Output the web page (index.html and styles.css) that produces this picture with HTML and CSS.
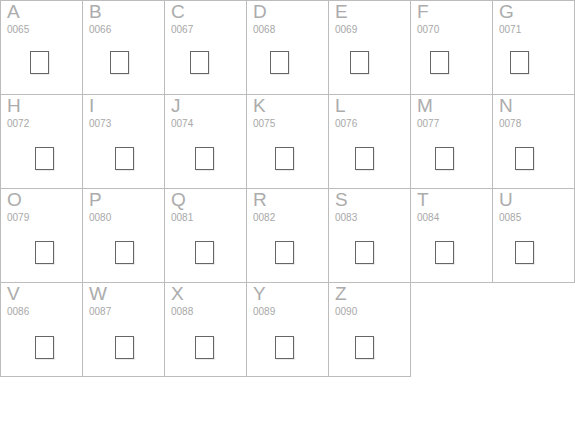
FILE: index.html
```html
<!DOCTYPE html>
<html>
<head>
<meta charset="utf-8">
<link rel="stylesheet" href="styles.css">
</head>
<body>
<div class="charmap">
  <div class="cell"><div class="letter">A</div><div class="code">0065</div><div class="glyph"></div></div>
  <div class="cell"><div class="letter">B</div><div class="code">0066</div><div class="glyph"></div></div>
  <div class="cell"><div class="letter">C</div><div class="code">0067</div><div class="glyph"></div></div>
  <div class="cell"><div class="letter">D</div><div class="code">0068</div><div class="glyph"></div></div>
  <div class="cell"><div class="letter">E</div><div class="code">0069</div><div class="glyph"></div></div>
  <div class="cell"><div class="letter">F</div><div class="code">0070</div><div class="glyph"></div></div>
  <div class="cell"><div class="letter">G</div><div class="code">0071</div><div class="glyph"></div></div>
  <div class="cell"><div class="letter">H</div><div class="code">0072</div><div class="glyph"></div></div>
  <div class="cell"><div class="letter">I</div><div class="code">0073</div><div class="glyph"></div></div>
  <div class="cell"><div class="letter">J</div><div class="code">0074</div><div class="glyph"></div></div>
  <div class="cell"><div class="letter">K</div><div class="code">0075</div><div class="glyph"></div></div>
  <div class="cell"><div class="letter">L</div><div class="code">0076</div><div class="glyph"></div></div>
  <div class="cell"><div class="letter">M</div><div class="code">0077</div><div class="glyph"></div></div>
  <div class="cell"><div class="letter">N</div><div class="code">0078</div><div class="glyph"></div></div>
  <div class="cell"><div class="letter">O</div><div class="code">0079</div><div class="glyph"></div></div>
  <div class="cell"><div class="letter">P</div><div class="code">0080</div><div class="glyph"></div></div>
  <div class="cell"><div class="letter">Q</div><div class="code">0081</div><div class="glyph"></div></div>
  <div class="cell"><div class="letter">R</div><div class="code">0082</div><div class="glyph"></div></div>
  <div class="cell"><div class="letter">S</div><div class="code">0083</div><div class="glyph"></div></div>
  <div class="cell"><div class="letter">T</div><div class="code">0084</div><div class="glyph"></div></div>
  <div class="cell"><div class="letter">U</div><div class="code">0085</div><div class="glyph"></div></div>
  <div class="cell"><div class="letter">V</div><div class="code">0086</div><div class="glyph"></div></div>
  <div class="cell"><div class="letter">W</div><div class="code">0087</div><div class="glyph"></div></div>
  <div class="cell"><div class="letter">X</div><div class="code">0088</div><div class="glyph"></div></div>
  <div class="cell"><div class="letter">Y</div><div class="code">0089</div><div class="glyph"></div></div>
  <div class="cell"><div class="letter">Z</div><div class="code">0090</div><div class="glyph"></div></div>
</div>
</body>
</html>
```

FILE: styles.css
```css
html, body {
  margin: 0;
  padding: 0;
  background: #ffffff;
}

body {
  font-family: "Liberation Sans", Arial, sans-serif;
}

.charmap {
  display: grid;
  grid-template-columns: repeat(7, 82px);
  grid-auto-rows: 94px;
  width: 575px;
  box-sizing: border-box;
  border-top: 1px solid #bcbcbc;
  border-left: 1px solid #bcbcbc;
}

.cell {
  border-right: 1px solid #bcbcbc;
  border-bottom: 1px solid #bcbcbc;
  --col: 0;
  --rowx: 34px;
  --rowy: 52px;
}

.cell:nth-child(7n+2) { --col: 1; }
.cell:nth-child(7n+3) { --col: 2; }
.cell:nth-child(7n+4) { --col: 3; }
.cell:nth-child(7n+5) { --col: 4; }
.cell:nth-child(7n+6) { --col: 5; }
.cell:nth-child(7n+7) { --col: 6; }

.cell:nth-child(-n+7) {
  --rowx: 29px;
  --rowy: 50px;
}

.cell:nth-child(n+22) {
  --rowy: 53px;
}

.letter {
  font-size: 19px;
  line-height: 20px;
  color: #acacac;
  padding: 1px 0 0 6px;
}

.code {
  font-size: 10px;
  line-height: 12px;
  color: #a8a8a8;
  padding: 2px 0 0 6px;
}

.glyph {
  box-sizing: border-box;
  width: 19px;
  height: 23px;
  border: 1px solid #666666;
  box-shadow: 1px 1px 0 rgba(0, 0, 0, 0.08);
  margin-top: calc(var(--rowy) - 35px);
  margin-left: calc(var(--rowx) - var(--col) * 2px);
}
```
